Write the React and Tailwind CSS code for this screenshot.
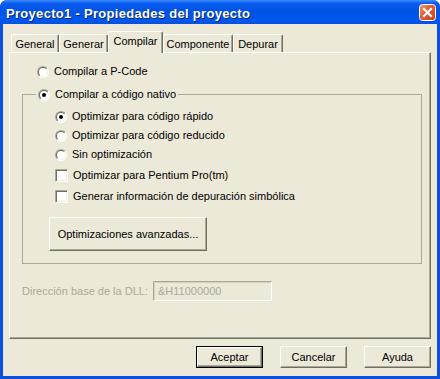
import React from "react";

function Radio({checked}) {
    return (
        <svg width="12" height="12" viewBox="0 0 12 12" className="shrink-0">
            <defs>
                <linearGradient id="rOut" x1="0" y1="0" x2="1" y2="1">
                    <stop offset="0.5" stopColor="#aca899"/>
                    <stop offset="0.5" stopColor="#ffffff"/>
                </linearGradient>
                <linearGradient id="rIn" x1="0" y1="0" x2="1" y2="1">
                    <stop offset="0.5" stopColor="#716f64"/>
                    <stop offset="0.5" stopColor="#f1efe2"/>
                </linearGradient>
            </defs>
            <circle cx="6" cy="6" r="6" fill="url(#rOut)"/>
            <circle cx="6" cy="6" r="5" fill="url(#rIn)"/>
            <circle cx="6" cy="6" r="4" fill="#ffffff"/>
            {checked && <circle cx="6" cy="6" r="2" fill="#000000"/>}
        </svg>
    );
}

function Check() {
    return (
        <span
            className="w-[13px] h-[13px] shrink-0 bg-white border border-t-[#aca899] border-l-[#aca899] border-r-white border-b-white shadow-[inset_1px_1px_0_#716f64,inset_-1px_-1px_0_#f1efe2]"/>
    );
}

function Option({children, control}) {
    return (
        <div className="flex items-center h-[13px]">
            {control}
            <span className="ml-[5px] leading-[13px] whitespace-nowrap">{children}</span>
        </div>
    );
}

function Button({children, isDefault, className = ""}) {
    const inner =
        "w-full h-full flex items-center justify-center bg-[#ece9d8] border border-white border-r-[#716f64] border-b-[#716f64] shadow-[inset_-1px_-1px_0_#aca899]";
    if (isDefault) {
        return (
            <div className={`border border-black ${className}`}>
                <div className={inner}>{children}</div>
            </div>
        );
    }
    return (
        <div className={className}>
            <div className={inner}>{children}</div>
        </div>
    );
}

function CloseButton() {
    return (
        <svg width="17" height="17" viewBox="0 0 17 17" className="shrink-0">
            <defs>
                <linearGradient id="cbg" x1="0" y1="0" x2="1" y2="1">
                    <stop offset="0" stopColor="#f39a78"/>
                    <stop offset="0.45" stopColor="#e35a33"/>
                    <stop offset="1" stopColor="#c9401c"/>
                </linearGradient>
            </defs>
            <rect x="0.5" y="0.5" width="16" height="16" rx="3" fill="url(#cbg)" stroke="#ffffff"/>
            <path d="M5 5 L12 12 M12 5 L5 12" stroke="#ffffff" strokeWidth="2.2" strokeLinecap="square"/>
        </svg>
    );
}

export default function App() {
    const tabs = [
        {name: "General", w: "w-[48px]"},
        {name: "Generar", w: "w-[49px]"},
        {name: "Compilar", w: "w-[55px]", active: true},
        {name: "Componente", w: "w-[70px]"},
        {name: "Depurar", w: "w-[50px]"},
    ];

    return (
        <div className="w-[440px] h-[379px] bg-white">
            <div
                className="w-[440px] h-[379px] rounded-t-[7px] bg-[#0a4fdf] flex flex-col font-['Liberation_Sans',Arial,sans-serif] text-[11px] text-black overflow-hidden">
                {/* Title bar */}
                <div
                    className="h-[24px] shrink-0 flex items-center justify-between pl-[6px] pr-[4px] bg-[linear-gradient(180deg,#3d8fff_0%,#0a5cf0_14%,#0054e3_45%,#0058ee_85%,#0a4fdf_100%)]">
                    <span
                        className="text-white font-bold text-[13px] tracking-[0.3px] leading-none pt-[2px] [text-shadow:1px_1px_0_#0a2470] whitespace-nowrap">
                        Proyecto1 - Propiedades del proyecto
                    </span>
                    <CloseButton/>
                </div>

                {/* Client area */}
                <div className="flex-1 mx-[3px] mb-[3px] bg-[#ece9d8] flex flex-col">
                    {/* Tabs */}
                    <div className="h-[28px] shrink-0 flex items-end pl-[8px]">
                        {tabs.map((t) => (
                            <div
                                key={t.name}
                                className={`${t.w} flex items-center justify-center rounded-t-[2px] bg-[#ece9d8] border-t border-l border-white border-r border-r-[#716f64] shadow-[inset_-1px_0_0_#aca899] ${
                                    t.active ? "h-[22px] -mb-[1px] relative z-10 pb-[2px]" : "h-[18px] pt-[1px]"
                                }`}
                            >
                                <span className="leading-[13px] whitespace-nowrap">{t.name}</span>
                            </div>
                        ))}
                    </div>

                    {/* Panel */}
                    <div
                        className="h-[287px] shrink-0 mx-[6px] border border-white border-r-[#716f64] border-b-[#716f64] shadow-[inset_-1px_-1px_0_#aca899] pt-[12px] flex flex-col">
                        <div className="pl-[27px]">
                            <Option control={<Radio/>}>Compilar a P-Code</Option>
                        </div>

                        <fieldset className="mt-[10px] ml-[12px] mr-[8px] border border-[#aca899] p-0 pt-[9px] pb-[12px] min-w-0">
                            <legend className="ml-[13px] px-[2px]">
                                <Option control={<Radio checked/>}>Compilar a código nativo</Option>
                            </legend>
                            <div className="pl-[32px] flex flex-col">
                                <Option control={<Radio checked/>}>Optimizar para código rápido</Option>
                                <div className="mt-[6px]">
                                    <Option control={<Radio/>}>Optimizar para código reducido</Option>
                                </div>
                                <div className="mt-[6px]">
                                    <Option control={<Radio/>}>Sin optimización</Option>
                                </div>
                                <div className="mt-[8px]">
                                    <Option control={<Check/>}>Optimizar para Pentium Pro(tm)</Option>
                                </div>
                                <div className="mt-[8px]">
                                    <Option control={<Check/>}>Generar información de depuración simbólica</Option>
                                </div>
                            </div>
                            <div className="pl-[26px] mt-[14px]">
                                <Button className="w-[158px] h-[34px]">Optimizaciones avanzadas...</Button>
                            </div>
                        </fieldset>

                        <div className="mt-[17px] ml-[12px] flex items-center">
                            <span className="w-[131px] text-[#aca899] whitespace-nowrap">Dirección base de la DLL:</span>
                            <div
                                className="w-[119px] h-[20px] flex items-center pl-[4px] text-[#aca899] border border-t-[#aca899] border-l-[#aca899] border-r-white border-b-white shadow-[inset_1px_1px_0_#d4d0c8]">
                                &amp;H11000000
                            </div>
                        </div>
                    </div>

                    {/* Buttons */}
                    <div className="mt-[7px] flex justify-end gap-[17px] pr-[6px]">
                        <Button isDefault className="w-[67px] h-[22px]">Aceptar</Button>
                        <Button className="w-[67px] h-[22px]">Cancelar</Button>
                        <Button className="w-[67px] h-[22px]">Ayuda</Button>
                    </div>
                </div>
            </div>
        </div>
    );
}
